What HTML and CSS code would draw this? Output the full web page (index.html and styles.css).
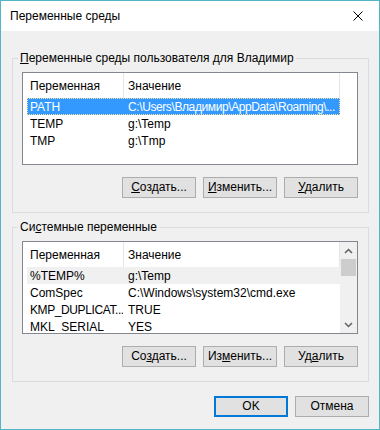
FILE: index.html
```html
<!DOCTYPE html>
<html lang="ru">

<head>
  <meta charset="UTF-8" />
  <title>Переменные среды</title>
  <link rel="stylesheet" href="styles.css">
</head>

<body>

  <div class="window">
    <div class="titlebar">
      <span class="title">Переменные среды</span>
      <span class="close">
        <svg width="10" height="10" viewBox="0 0 10 10">
          <path d="M0.5 0.5 L9.5 9.5 M9.5 0.5 L0.5 9.5" stroke="#000" stroke-width="1" fill="none" />
        </svg>
      </span>
    </div>

    <div class="client">
      <!-- Переменные пользователя -->
      <fieldset class="group">
        <legend><u>П</u>еременные среды пользователя для Владимир</legend>
        <div class="group-body">
          <div class="list">
            <div class="list-main">
              <div class="list-head">
                <span class="hcol1">Переменная</span>
                <span class="hcol2">Значение</span>
              </div>
              <div class="row selected">
                <span class="col1">PATH</span>
                <span class="col2 tight">C:\Users\Владимир\AppData\Roaming\...</span>
              </div>
              <div class="row">
                <span class="col1">TEMP</span>
                <span class="col2">g:\Temp</span>
              </div>
              <div class="row">
                <span class="col1">TMP</span>
                <span class="col2">g:\Tmp</span>
              </div>
            </div>
          </div>
          <div class="buttons">
            <button class="btn"><u>С</u>оздать...</button>
            <button class="btn"><u>И</u>зменить...</button>
            <button class="btn"><u>У</u>далить</button>
          </div>
        </div>
      </fieldset>

      <!-- Системные переменные -->
      <fieldset class="group second">
        <legend>Си<u>с</u>темные переменные</legend>
        <div class="group-body">
          <div class="list">
            <div class="list-main">
              <div class="list-head">
                <span class="hcol1">Переменная</span>
                <span class="hcol2">Значение</span>
              </div>
              <div class="row inactive">
                <span class="col1">%TEMP%</span>
                <span class="col2">g:\Temp</span>
              </div>
              <div class="row">
                <span class="col1">ComSpec</span>
                <span class="col2">C:\Windows\system32\cmd.exe</span>
              </div>
              <div class="row">
                <span class="col1 tight">KMP_DUPLICAT...</span>
                <span class="col2">TRUE</span>
              </div>
              <div class="row">
                <span class="col1">MKL_SERIAL</span>
                <span class="col2">YES</span>
              </div>
            </div>
            <div class="scrollbar">
              <span class="arrow">
                <svg width="9" height="6" viewBox="0 0 9 6">
                  <path d="M1 5 L4.5 1.5 L8 5" stroke="#606060" stroke-width="1.5" fill="none" />
                </svg>
              </span>
              <span class="thumb"></span>
              <span class="track"></span>
              <span class="arrow">
                <svg width="9" height="6" viewBox="0 0 9 6">
                  <path d="M1 1 L4.5 4.5 L8 1" stroke="#606060" stroke-width="1.5" fill="none" />
                </svg>
              </span>
            </div>
          </div>
          <div class="buttons">
            <button class="btn">Со<u>з</u>дать...</button>
            <button class="btn">Из<u>м</u>енить...</button>
            <button class="btn">Уд<u>а</u>лить</button>
          </div>
        </div>
      </fieldset>

      <div class="footer">
        <button class="btn default">OK</button>
        <button class="btn">Отмена</button>
      </div>
    </div>
  </div>

</body>

</html>
```

FILE: styles.css
```css
body {
  margin: 0;
  padding: 0;
  font-family: "Liberation Sans", Arial, sans-serif;
  font-size: 12px;
  color: #000;
}

.window {
  width: 380px;
  height: 430px;
  box-sizing: border-box;
  border: 1px solid #53b4c8;
  display: flex;
  flex-direction: column;
  background-color: #f0f0f0;
}

.titlebar {
  height: 30px;
  background-color: #fff;
  display: flex;
  align-items: center;
  justify-content: space-between;
  padding: 0 16px 0 9px;
}

.title {
  font-size: 12px;
}

.close {
  display: flex;
  width: 10px;
  height: 10px;
}

.client {
  flex: 1;
  display: flex;
  flex-direction: column;
}

/* Группы */
.group {
  margin: 20px 10px 0 11px;
  padding: 0;
  border: 1px solid #dcdcdc;
  min-width: 0;
}

.group.second {
  margin-top: 7px;
}

.group legend {
  margin-left: 5px;
  padding: 0 2px;
  line-height: 14px;
  font-size: 12px;
}

.group-body {
  padding: 7px 10px 14px 9px;
}

/* Список */
.list {
  height: 93px;
  box-sizing: border-box;
  border: 1px solid #828790;
  background-color: #fff;
  display: flex;
  overflow: hidden;
}

.list-main {
  flex: 1;
  min-width: 0;
}

.list-head {
  height: 25px;
  display: flex;
  align-items: center;
}

.list-head span {
  height: 100%;
  display: flex;
  align-items: center;
  box-sizing: border-box;
  border-right: 1px solid #e5e5e5;
}

.hcol1 {
  width: 101px;
  padding-left: 7px;
}

.hcol2 {
  width: 216px;
  padding-left: 4px;
}

.row {
  height: 17px;
  width: 313px;
  margin-left: 4px;
  box-sizing: border-box;
  display: flex;
  align-items: center;
  white-space: nowrap;
}

.row span {
  overflow: hidden;
  box-sizing: border-box;
}

.col1 {
  width: 96px;
  padding-left: 3px;
  flex-shrink: 0;
}

.col2 {
  flex: 1;
  padding-left: 5px;
}

.tight {
  letter-spacing: -0.4px;
}

.row.selected {
  background-color: #3399ff;
  color: #fff;
  outline: 1px dotted #fbe0a0;
  outline-offset: -1px;
}

.row.inactive {
  background-color: #f0f0f0;
}

/* Полоса прокрутки */
.scrollbar {
  width: 17px;
  background-color: #f0f0f0;
  display: flex;
  flex-direction: column;
  align-items: center;
}

.arrow {
  height: 17px;
  display: flex;
  align-items: center;
  justify-content: center;
}

.thumb {
  width: 15px;
  height: 17px;
  background-color: #cdcdcd;
}

.track {
  flex: 1;
}

/* Кнопки */
.buttons,
.footer {
  display: flex;
  justify-content: flex-end;
  gap: 7px;
}

.buttons {
  margin-top: 12px;
}

.footer {
  padding: 14px 10px 0 0;
}

.btn {
  width: 74px;
  height: 21px;
  box-sizing: border-box;
  padding: 0;
  background-color: #e1e1e1;
  border: 1px solid #adadad;
  font-family: "Liberation Sans", Arial, sans-serif;
  font-size: 12px;
  color: #000;
  line-height: 17px;
}

.btn.default {
  border-color: #0078d7;
  box-shadow: inset 0 0 0 1px #0078d7;
}
```
